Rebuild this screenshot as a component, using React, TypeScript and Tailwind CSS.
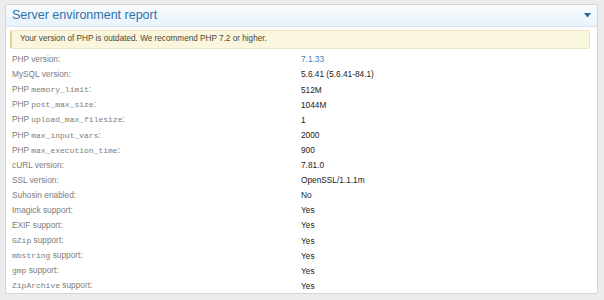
import React from 'react';

type Row = { label: React.ReactNode; value: string; link?: boolean };

const Mono = ({ children }: { children: React.ReactNode }) => (
  <span className="font-['Liberation_Mono',monospace] text-[8px]">{children}</span>
);

const rows: Row[] = [
  { label: 'PHP version:', value: '7.1.33', link: true },
  { label: 'MySQL version:', value: '5.6.41 (5.6.41-84.1)' },
  { label: <>PHP <Mono>memory_limit</Mono>:</>, value: '512M' },
  { label: <>PHP <Mono>post_max_size</Mono>:</>, value: '1044M' },
  { label: <>PHP <Mono>upload_max_filesize</Mono>:</>, value: '1' },
  { label: <>PHP <Mono>max_input_vars</Mono>:</>, value: '2000' },
  { label: <>PHP <Mono>max_execution_time</Mono>:</>, value: '900' },
  { label: 'cURL version:', value: '7.81.0' },
  { label: 'SSL version:', value: 'OpenSSL/1.1.1m' },
  { label: 'Suhosin enabled:', value: 'No' },
  { label: 'Imagick support:', value: 'Yes' },
  { label: 'EXIF support:', value: 'Yes' },
  { label: <><Mono>GZip</Mono> support:</>, value: 'Yes' },
  { label: <><Mono>mbstring</Mono> support:</>, value: 'Yes' },
  { label: <><Mono>gmp</Mono> support:</>, value: 'Yes' },
  { label: <><Mono>ZipArchive</Mono> support:</>, value: 'Yes' },
];

export default function App() {
  return (
    <div className="w-[604px] h-[300px] bg-[#ececec] pt-[4px] pl-[5px] font-['Liberation_Sans',Arial,sans-serif]">
      <div className="w-[593px] h-[290px] bg-white border border-[#d6d6d6] rounded-[2px] overflow-hidden">
        {/* Header */}
        <div className="h-[22px] flex items-center justify-between pl-[6px] pr-[6px] bg-gradient-to-b from-[#f7fbfe] to-[#e9f3fb] border-b border-[#d9e6f1]">
          <span className="text-[12.5px] text-[#2b72ad] leading-none">Server environment report</span>
          <svg width="7" height="5" viewBox="0 0 7 5">
            <path d="M0 0 L7 0 L3.5 4.5 Z" fill="#2a6aa0" />
          </svg>
        </div>

        {/* Notice */}
        <div className="ml-[4px] mr-[7px] mt-[3px] h-[19px] flex items-center pl-[8px] bg-[#f9f6dd] border border-[#ece6c2] border-l-[2px] border-l-[#e3d78c] rounded-[2px] text-[8.2px] text-[#4f4830]">
          Your version of PHP is outdated. We recommend PHP 7.2 or higher.
        </div>

        {/* Rows */}
        <div className="mt-[3px] pl-[6px]">
          {rows.map((r, i) => (
            <div key={i} className="grid grid-cols-[289px_1fr] h-[15.1px] items-center text-[8.3px] leading-none">
              <span className="text-[#7c7c7c]">{r.label}</span>
              <span className={r.link ? 'text-[#3b82c0]' : 'text-[#222]'}>{r.value}</span>
            </div>
          ))}
        </div>
      </div>
    </div>
  );
}
